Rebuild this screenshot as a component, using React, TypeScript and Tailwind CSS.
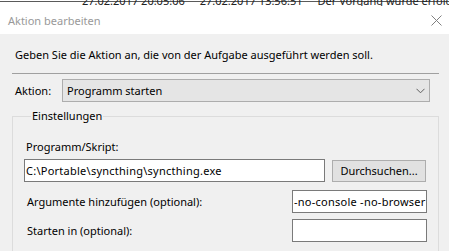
import React from "react";

// Dialog "Aktion bearbeiten" (Windows task scheduler look)
const FONT = "font-['Noto_Sans',sans-serif]";

const Chevron: React.FC = () => (
  <svg width="9" height="6" viewBox="0 0 9 6" className="shrink-0">
    <path d="M0.5 0.8 L4.5 4.8 L8.5 0.8" fill="none" stroke="#606060" strokeWidth="1" />
  </svg>
);

const CloseIcon: React.FC = () => (
  <svg width="11" height="11" viewBox="0 0 11 11">
    <path d="M0.5 0.5 L10.5 10.5 M10.5 0.5 L0.5 10.5" stroke="#808080" strokeWidth="1" fill="none" />
  </svg>
);

const TextBox: React.FC<{ value?: string; className?: string }> = ({ value = "", className = "" }) => (
  <input
    readOnly
    defaultValue={value}
    className={`h-[23px] border border-[#7a7a7a] bg-white pl-[1px] text-[11px] leading-[21px] tracking-[0.25px] text-black outline-none ${FONT} ${className}`}
  />
);

export default function App() {
  return (
    <div className={`flex h-[251px] w-[449px] flex-col overflow-hidden bg-white text-[11px] leading-[15px] text-black ${FONT}`}>
      {/* clipped row of the window behind */}
      <div className="h-[6px] shrink-0 overflow-hidden">
        <div className="mt-[1px] h-px bg-[#5a5a5a]" />
        <div className="-mt-[9px] flex whitespace-nowrap text-[#222]">
          <span className="ml-[82px]">27.02.2017 20:05:06</span>
          <span className="ml-[15px]">27.02.2017 13:56:51</span>
          <span className="ml-[15px]">Der Vorgang wurde erfolgreich beendet.</span>
        </div>
      </div>

      {/* title bar */}
      <div className="flex h-[28px] shrink-0 items-center justify-between bg-white pl-[8px] pr-[7px]">
        <span className="text-[11px] text-[#999999]">Aktion bearbeiten</span>
        <CloseIcon />
      </div>

      {/* body */}
      <div className="flex flex-1 flex-col bg-[#f0f0f0]">
        <p className="pl-[15px] pt-[13px]">Geben Sie die Aktion an, die von der Aufgabe ausgeführt werden soll.</p>
        <div className="ml-[12px] mr-[10px] mt-[11px] h-px bg-[#a0a0a0]" />

        <div className="mt-[5px] flex items-center pl-[15px]">
          <span className="w-[47px]">Aktion:</span>
          <div className="flex h-[23px] w-[368px] items-center justify-between border border-[#adadad] bg-[#e5e5e5] pl-[4px] pr-[4px]">
            <span>Programm starten</span>
            <Chevron />
          </div>
        </div>

        <fieldset className="ml-[12px] mr-[10px] mt-[6px] border border-[#dcdcdc] pb-[20px] pl-[11px] pr-[11px]">
          <legend className="ml-[7px] px-[1px] leading-[16px]">Einstellungen</legend>

          <p className="pl-[2px] pt-[15px]">Programm/Skript:</p>
          <div className="mt-[5px] flex items-end">
            <TextBox value="C:\Portable\syncthing\syncthing.exe" className="w-[301px]" />
            <button className="ml-[7px] h-[22px] w-[94px] border border-[#adadad] bg-[#e1e1e1] text-[11px] leading-[20px]">
              Durchsuchen...
            </button>
          </div>

          <div className="mt-[8px] flex items-center justify-between">
            <span className="pl-[3px]">Argumente hinzufügen (optional):</span>
            <TextBox value="-no-console -no-browser" className="w-[135px]" />
          </div>

          <div className="mt-[6px] flex items-center justify-between">
            <span className="pl-[3px]">Starten in (optional):</span>
            <TextBox className="w-[135px]" />
          </div>
        </fieldset>
      </div>
    </div>
  );
}
